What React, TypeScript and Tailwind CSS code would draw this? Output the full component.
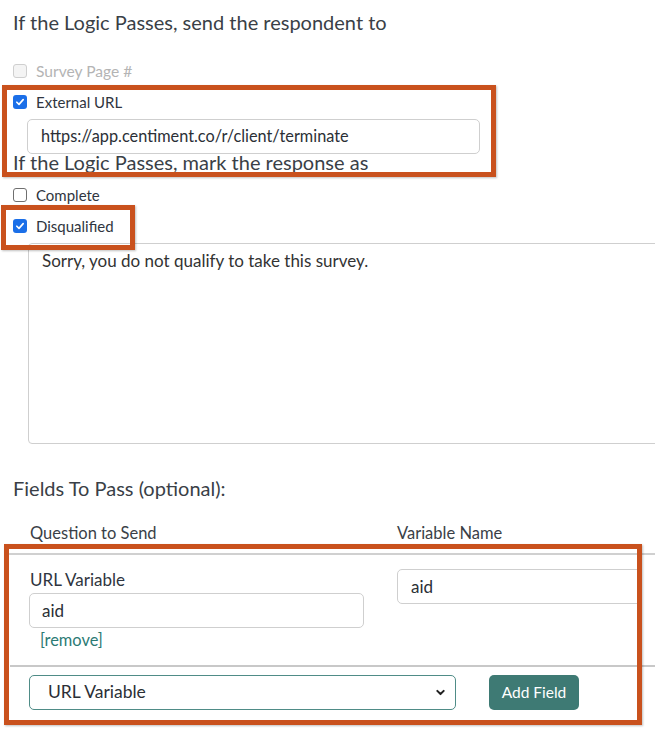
import React from 'react';

const Check: React.FC<{ checked?: boolean; disabled?: boolean }> = ({ checked, disabled }) => {
  if (checked) {
    return (
      <span className="w-[14px] h-[14px] rounded-[3px] bg-[#1b6fe8] flex items-center justify-center shrink-0">
        <svg viewBox="0 0 12 12" className="w-[10px] h-[10px]">
          <path d="M2.2 6.3 L4.8 8.8 L9.8 3.2" fill="none" stroke="white" strokeWidth="2" strokeLinecap="round" strokeLinejoin="round" />
        </svg>
      </span>
    );
  }
  return (
    <span
      className={
        disabled
          ? 'w-[14px] h-[14px] rounded-[3px] border border-[#cfcfcf] bg-[#f4f4f4] shrink-0'
          : 'w-[14px] h-[14px] rounded-[3px] border border-[#6f6f6f] bg-white shrink-0'
      }
    />
  );
};

const Row: React.FC<{ label: string; checked?: boolean; disabled?: boolean; className?: string }> = ({
  label,
  checked,
  disabled,
  className,
}) => (
  <div className={`flex items-center gap-[9px] pl-[13px] h-[20px] ${className ?? ''}`}>
    <Check checked={checked} disabled={disabled} />
    <span className={`leading-[20px] ${disabled ? 'text-[15.6px] text-[#b4b4b4]' : 'text-[15px] text-[#2f3540]'}`}>{label}</span>
  </div>
);

const App: React.FC = () => {
  return (
    <div className="relative w-[655px] h-[742px] bg-white overflow-hidden font-['Lato',sans-serif] text-[#333]">
      <div className="flex flex-col">
        <div className="mt-[10px] ml-[13px] text-[20px] leading-[24px] text-[#3a3f47]">
          If the Logic Passes, send the respondent to
        </div>

        <Row label="Survey Page #" disabled className="mt-[27px]" />
        <Row label="External URL" checked className="mt-[11px]" />

        <div className="mt-[7px] ml-[27px] w-[453px] h-[35px] border border-[#cfcfcf] rounded-[5px] flex items-center pl-[13px] text-[16.3px] text-[#2b2f36]">
          https://app.centiment.co/r/client/terminate
        </div>

        <div className="mt-[-1px] ml-[13px] text-[20px] leading-[18px] text-[#3a3f47]">
          If the Logic Passes, mark the response as
        </div>

        <Row label="Complete" className="mt-[14px]" />
        <Row label="Disqualified" checked className="mt-[11px]" />

        <div className="mt-[7px] ml-[28px] w-[660px] h-[201px] border border-[#cfcfcf] rounded-[4px] pl-[13px] pt-[6px] text-[17px] leading-[22px] text-[#333]">
          Sorry, you do not qualify to take this survey.
        </div>

        <div className="mt-[32px] ml-[13px] text-[20px] leading-[24px] text-[#3a3f47]">
          Fields To Pass (optional):
        </div>

        <div className="mt-[23px] flex text-[16.5px] leading-[20px] text-[#3a3f47]">
          <span className="ml-[30px] w-[367px]">Question to Send</span>
          <span>Variable Name</span>
        </div>

        <div className="mt-[10px] ml-[5px] h-[2px] bg-[#d0d0d0]" />

        <div className="flex h-[110px]">
          <div className="ml-[29px] w-[335px] flex flex-col">
            <span className="mt-[15px] ml-[1px] text-[17px] leading-[20px] text-[#2f3540]">URL Variable</span>
            <div className="mt-[3px] h-[35px] border border-[#cfcfcf] rounded-[5px] flex items-center pl-[12px] text-[17px] text-[#2b2f36]">
              aid
            </div>
            <span className="mt-[2px] ml-[11px] text-[16.4px] leading-[20px] text-[#2b7a74]">[remove]</span>
          </div>
          <div className="ml-[33px] mt-[14px] w-[245px] h-[35px] border border-[#cfcfcf] rounded-[5px] flex items-center pl-[13px] text-[17px] text-[#2b2f36]">
            aid
          </div>
        </div>

        <div className="ml-[10px] h-[2px] bg-[#c8c8c8]" />

        <div className="mt-[8px] flex items-center">
          <div className="ml-[29px] w-[427px] h-[35px] border border-[#4f8c87] rounded-[5px] flex items-center justify-between pl-[18px] pr-[9px] text-[17.5px] text-[#2b2f36]">
            <span>URL Variable</span>
            <svg viewBox="0 0 12 12" className="w-[11px] h-[11px]">
              <path d="M2.5 4.2 L6 7.7 L9.5 4.2" fill="none" stroke="#222" strokeWidth="2.2" strokeLinecap="round" strokeLinejoin="round" />
            </svg>
          </div>
          <button className="ml-[33px] w-[90px] h-[35px] rounded-[5px] bg-[#3e7a74] text-white text-[15.5px]">
            Add Field
          </button>
        </div>
      </div>

      {/* annotation boxes */}
      <div className="absolute left-[2px] top-[85px] w-[494px] h-[92px] border-[5px] border-[#c9511d] shadow-[1px_1px_2px_rgba(0,0,0,0.25)]" />
      <div className="absolute left-[1px] top-[205px] w-[134px] h-[45px] border-[5px] border-[#c9511d] shadow-[1px_1px_2px_rgba(0,0,0,0.25)]" />
      <div className="absolute left-[4px] top-[544px] w-[638px] h-[181px] border-[5px] border-[#c9511d] shadow-[1px_1px_2px_rgba(0,0,0,0.25)]" />
    </div>
  );
};

export default App;
